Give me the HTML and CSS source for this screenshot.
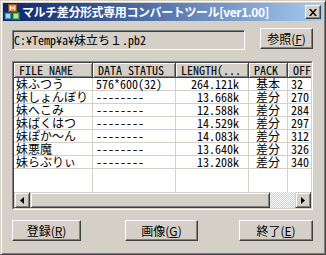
FILE: index.html
```html
<!DOCTYPE html>
<html lang="ja">
<head>
    <meta charset="UTF-8">
    <title>マルチ差分形式専用コンバートツール</title>
    <link rel="stylesheet" href="styles.css">
</head>
<body>
    <div class="window">
        <div class="titlebar">
            <svg class="app-icon" width="16" height="16" viewBox="0 0 16 16">
                <rect x="4.5" y="0.5" width="8" height="7" fill="#f08a3c" stroke="#9c4a18"/>
                <rect x="6" y="2" width="1" height="4" fill="#fff"/>
                <rect x="10" y="2" width="1" height="4" fill="#fff"/>
                <rect x="7" y="3.5" width="3" height="1" fill="#fff"/>
                <rect x="0.5" y="8.5" width="7" height="7" fill="#3c8cc8" stroke="#1c4a78"/>
                <rect x="8.5" y="8.5" width="7" height="7" fill="#5cb45c" stroke="#2a6a2a"/>
                <rect x="2" y="10" width="4" height="4" fill="#a8d4f0"/>
                <rect x="10" y="10" width="4" height="4" fill="#b4e0a8"/>
            </svg>
            <span class="title">マルチ差分形式専用コンバートツール[ver1.00]</span>
            <div class="close">
                <svg width="8" height="7" viewBox="0 0 8 7">
                    <path d="M0 0h2l2 2.5L6 0h2L5 3.5 8 7H6L4 4.5 2 7H0l3-3.5z" fill="#000"/>
                </svg>
            </div>
        </div>

        <div class="client">
            <div class="path-row">
                <div class="path-box">C:¥Temp¥a¥妹立ち<span class="fw">１</span>.pb2</div>
                <button class="btn btn-browse">参照(<u>F</u>)</button>
            </div>

            <div class="listview">
                <div class="lv-inner">
                    <div class="lv-head">
                        <div class="hcell c-name">FILE NAME</div>
                        <div class="hcell c-status">DATA STATUS</div>
                        <div class="hcell c-length">LENGTH(...</div>
                        <div class="hcell c-pack">PACK</div>
                        <div class="hcell c-off">OFFSET</div>
                    </div>
                    <div class="lv-rows" id="rows"></div>
                    <div class="lv-fill">
                        <div class="cell c-name"></div>
                        <div class="cell c-status"></div>
                        <div class="cell c-length"></div>
                        <div class="cell c-pack"></div>
                        <div class="cell c-off"></div>
                    </div>
                    <div class="hscroll">
                        <div class="sb-btn">
                            <svg width="4" height="7" viewBox="0 0 4 7"><path d="M4 0v7L0 3.5z" fill="#000"/></svg>
                        </div>
                        <div class="sb-thumb"></div>
                        <div class="sb-track"></div>
                        <div class="sb-btn">
                            <svg width="4" height="7" viewBox="0 0 4 7"><path d="M0 0v7l4-3.5z" fill="#000"/></svg>
                        </div>
                    </div>
                </div>
            </div>

            <div class="actions">
                <button class="btn btn-reg">登録(<u>R</u>)</button>
                <button class="btn btn-img">画像(<u>G</u>)</button>
                <button class="btn btn-exit">終了(<u>E</u>)</button>
            </div>
        </div>
    </div>

    <script>
        const files = [
            ['妹ふつう', '576*600(32)', '264.121k', '基本', '32'],
            ['妹しょんぼり', '--------', '13.668k', '差分', '270'],
            ['妹へこみ', '--------', '12.588k', '差分', '284'],
            ['妹ばくはつ', '--------', '14.529k', '差分', '297'],
            ['妹ぽか<span class="fw">～</span>ん', '--------', '14.083k', '差分', '312'],
            ['妹悪魔', '--------', '13.640k', '差分', '326'],
            ['妹らぶりぃ', '--------', '13.208k', '差分', '340']
        ];

        const rows = document.getElementById('rows');
        files.forEach(f => {
            const row = document.createElement('div');
            row.className = 'lv-row';
            row.innerHTML = `
                <div class="cell c-name">${f[0]}</div>
                <div class="cell c-status">${f[1]}</div>
                <div class="cell c-length">${f[2]}</div>
                <div class="cell c-pack">${f[3]}</div>
                <div class="cell c-off">${f[4]}</div>
            `;
            rows.appendChild(row);
        });
    </script>
</body>
</html>
```

FILE: styles.css
```css
body {
    margin: 0;
    background: #d4d0c8;
    font-family: "Noto Sans CJK JP", sans-serif;
    font-size: 12px;
    color: #000;
}
.window {
    width: 326px;
    height: 255px;
    box-sizing: border-box;
    padding: 2px;
    border: 1px solid;
    border-color: #d4d0c8 #404040 #404040 #d4d0c8;
    box-shadow: inset 1px 1px #fff, inset -1px -1px #808080;
    display: flex;
    flex-direction: column;
}
.titlebar {
    height: 18px;
    display: flex;
    align-items: center;
    padding: 0 2px 0 1px;
    background: linear-gradient(to right, #0a246a, #a6caf0);
}
.app-icon {
    flex: none;
}
.titlebar .title {
    flex: 1;
    margin-left: 2px;
    color: #fff;
    font-weight: bold;
    line-height: 14px;
    white-space: nowrap;
    letter-spacing: -0.4px;
}
.close {
    width: 16px;
    height: 14px;
    box-sizing: border-box;
    display: flex;
    align-items: center;
    justify-content: center;
    background: #d4d0c8;
    border: 1px solid;
    border-color: #fff #404040 #404040 #fff;
    box-shadow: inset -1px -1px #808080;
}
.client {
    flex: 1;
    padding: 7px 10px 0 9px;
}
.path-row {
    display: flex;
    justify-content: space-between;
    align-items: flex-start;
}
.path-box {
    width: 233px;
    height: 20px;
    margin-top: 2px;
    box-sizing: border-box;
    padding-left: 1px;
    border: 1px solid;
    border-color: #808080 #fff #fff #808080;
    box-shadow: inset 1px 1px #404040, inset -1px -1px #d4d0c8;
    line-height: 18px;
    white-space: nowrap;
}
/* half-width latin like the old fixed-pitch font */
.path-box, .lv-inner {
    font-feature-settings: "hwid";
}
.fw {
    font-feature-settings: normal;
}
.btn {
    height: 21px;
    padding: 0;
    box-sizing: border-box;
    font-family: inherit;
    font-size: 12px;
    line-height: 17px;
    color: #000;
    background: #d4d0c8;
    border: 1px solid;
    border-color: #fff #404040 #404040 #fff;
    box-shadow: inset -1px -1px #808080;
}
.btn u {
    text-underline-offset: 1px;
}
.btn-browse {
    width: 53px;
}
.listview {
    margin-top: 11px;
    height: 149px;
    box-sizing: border-box;
    border: 1px solid;
    border-color: #808080 #fff #fff #808080;
}
.lv-inner {
    height: 100%;
    box-sizing: border-box;
    border: 1px solid;
    border-color: #404040 #d4d0c8 #d4d0c8 #404040;
    background: #fff;
    display: flex;
    flex-direction: column;
    overflow: hidden;
}
.lv-head, .lv-row, .lv-fill {
    display: flex;
    flex: none;
}
.lv-fill {
    flex: 1;
}
.c-name { width: 79px; }
.c-status { width: 83px; }
.c-length { width: 73px; }
.c-pack { width: 39px; }
.c-off { width: 60px; }
.hcell {
    flex: none;
    height: 15px;
    box-sizing: border-box;
    padding-left: 5px;
    line-height: 14px;
    white-space: nowrap;
    background: #d4d0c8;
    border-right: 1px solid #404040;
    border-bottom: 1px solid #404040;
    box-shadow: inset 1px 1px #fff, inset -1px -1px #808080;
}
.cell {
    flex: none;
    height: 13px;
    box-sizing: border-box;
    line-height: 12px;
    white-space: nowrap;
    border-right: 1px solid #d4d0c8;
    border-bottom: 1px solid #d4d0c8;
}
.lv-fill .cell {
    height: auto;
    border-bottom: none;
}
.cell.c-name { padding-left: 2px; }
.cell.c-status { padding-left: 3px; }
.cell.c-length { text-align: right; padding-right: 9px; }
.cell.c-pack { text-align: center; }
.cell.c-off { padding-left: 3px; }
.hscroll {
    height: 16px;
    flex: none;
    display: flex;
}
.sb-btn, .sb-thumb {
    box-sizing: border-box;
    background: #d4d0c8;
    border: 1px solid;
    border-color: #d4d0c8 #404040 #404040 #d4d0c8;
    box-shadow: inset 1px 1px #fff, inset -1px -1px #808080;
}
.sb-btn {
    width: 16px;
    display: flex;
    align-items: center;
    justify-content: center;
}
.sb-thumb {
    width: 240px;
}
.sb-track {
    flex: 1;
    background: repeating-conic-gradient(#d4d0c8 0 25%, #fff 0 50%) 0 0 / 2px 2px;
}
.actions {
    display: flex;
    margin-top: 10px;
}
.btn-reg { width: 69px; }
.btn-img { width: 73px; margin-left: 44px; }
.btn-exit { width: 74px; margin-left: auto; }
```
